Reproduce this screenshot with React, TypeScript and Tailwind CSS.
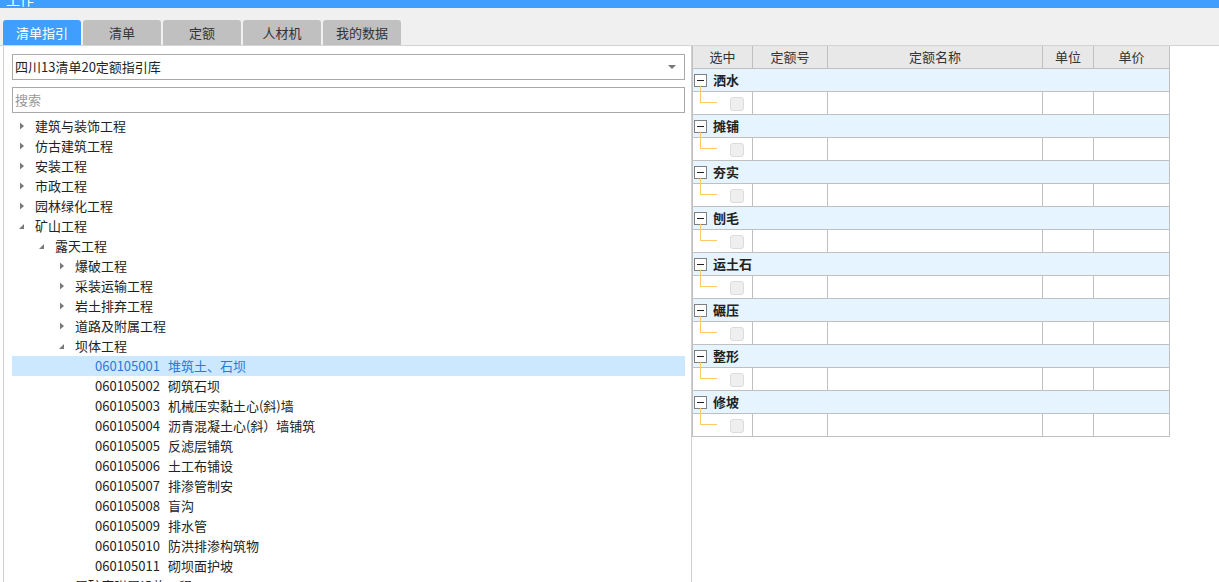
import React from "react";

const TABS = ["清单指引", "清单", "定额", "人材机", "我的数据"];

type Node = { level: number; text: string; code?: string; state?: "open" | "closed"; selected?: boolean };

const TREE: Node[] = [
  { level: 1, text: "建筑与装饰工程", state: "closed" },
  { level: 1, text: "仿古建筑工程", state: "closed" },
  { level: 1, text: "安装工程", state: "closed" },
  { level: 1, text: "市政工程", state: "closed" },
  { level: 1, text: "园林绿化工程", state: "closed" },
  { level: 1, text: "矿山工程", state: "open" },
  { level: 2, text: "露天工程", state: "open" },
  { level: 3, text: "爆破工程", state: "closed" },
  { level: 3, text: "采装运输工程", state: "closed" },
  { level: 3, text: "岩土排弃工程", state: "closed" },
  { level: 3, text: "道路及附属工程", state: "closed" },
  { level: 3, text: "坝体工程", state: "open" },
  { level: 4, code: "060105001", text: "堆筑土、石坝", selected: true },
  { level: 4, code: "060105002", text: "砌筑石坝" },
  { level: 4, code: "060105003", text: "机械压实黏土心(斜)墙" },
  { level: 4, code: "060105004", text: "沥青混凝土心(斜）墙铺筑" },
  { level: 4, code: "060105005", text: "反滤层铺筑" },
  { level: 4, code: "060105006", text: "土工布铺设" },
  { level: 4, code: "060105007", text: "排渗管制安" },
  { level: 4, code: "060105008", text: "盲沟" },
  { level: 4, code: "060105009", text: "排水管" },
  { level: 4, code: "060105010", text: "防洪排渗构筑物" },
  { level: 4, code: "060105011", text: "砌坝面护坡" },
  { level: 3, text: "尾矿库附属设施工程", state: "closed" },
];

const GROUPS = ["洒水", "摊铺", "夯实", "刨毛", "运土石", "碾压", "整形", "修坡"];

const INDENT = ["pl-0", "pl-0", "pl-[20px]", "pl-[40px]", "pl-[60px]"];

function Arrow({ state }: { state?: "open" | "closed" }) {
  if (state === "closed")
    return (
      <svg width="23" height="20" viewBox="0 0 23 20" className="shrink-0">
        <path d="M8 6.5 L12 10 L8 13.5 Z" fill="#7a7a7a" />
      </svg>
    );
  if (state === "open")
    return (
      <svg width="23" height="20" viewBox="0 0 23 20" className="shrink-0">
        <path d="M12 8 L12 13 L7 13 Z" fill="#7a7a7a" />
      </svg>
    );
  return <span className="w-[23px] shrink-0" />;
}

function TreeRow({ n }: { n: Node }) {
  return (
    <div
      className={`h-[20px] flex items-center ${INDENT[n.level]} ${n.selected ? "bg-[#cce8ff] text-[#2b78d8]" : "text-[#222]"}`}
    >
      <Arrow state={n.state} />
      {n.code && <span className="mr-[8px]">{n.code}</span>}
      <span className="whitespace-nowrap">{n.text}</span>
    </div>
  );
}

const CELL = "border-r border-b border-[#c0c0c0]";

export default function App() {
  return (
    <div
      className="h-screen overflow-hidden bg-white text-[13px] text-[#222]"
      style={{ fontFamily: '"Microsoft YaHei", "Noto Sans CJK SC", sans-serif' }}
    >
      <div className="h-[8px] bg-[#409eff] overflow-hidden">
        <div className="-mt-[11px] pl-[6px] text-white text-[14px] leading-[20px]">工作</div>
      </div>

      <div className="bg-[#f0f0f0] pt-[12px] pl-[3px] flex gap-[2px] border-b border-[#d4d4d4]">
        {TABS.map((t, i) => (
          <div
            key={t}
            className={`w-[78px] h-[25px] flex items-center justify-center rounded-t-[3px] ${i === 0 ? "bg-[#409eff] text-white" : "bg-[#c0c0c0] text-[#333]"}`}
          >
            {t}
          </div>
        ))}
      </div>

      <div className="flex h-[540px]">
        <div className="ml-[3px] w-[689px] border-l border-r border-[#d0d0d0] pl-[8px] pr-[6px] pt-[8px] overflow-hidden">
          <div className="h-[26px] border border-[#aaa] flex items-center pl-[2px] pr-[8px]">
            <span className="flex-1">四川13清单20定额指引库</span>
            <span className="w-0 h-0 border-l-[4px] border-r-[4px] border-t-[4px] border-l-transparent border-r-transparent border-t-[#777]" />
          </div>
          <div className="mt-[7px] h-[26px] border border-[#aaa] flex items-center pl-[2px] text-[#999]">搜索</div>
          <div className="mt-[3px]">
            {TREE.map((n, i) => (
              <TreeRow key={i} n={n} />
            ))}
          </div>
        </div>

        <div className="flex-1">
          <div className="w-[478px] border-l border-[#c0c0c0]">
            <div className="flex h-[23px] bg-[#e8e8e8] text-[#333]">
              <div className={`${CELL} w-[60px] flex items-center justify-center`}>选中</div>
              <div className={`${CELL} w-[75px] flex items-center justify-center`}>定额号</div>
              <div className={`${CELL} w-[215px] flex items-center justify-center`}>定额名称</div>
              <div className={`${CELL} w-[51px] flex items-center justify-center`}>单位</div>
              <div className={`${CELL} w-[76px] flex items-center justify-center`}>单价</div>
            </div>
            {GROUPS.map((g) => (
              <div key={g}>
                <div className="h-[23px] bg-[#e6f4ff] border-r border-b border-[#c0c0c0] flex items-center pl-[1px] relative">
                  <span className="w-[13px] h-[13px] border border-[#808080] bg-white flex items-center justify-center">
                    <span className="w-[7px] h-[1px] bg-[#222]" />
                  </span>
                  <span className="ml-[6px] font-bold text-[#222]">{g}</span>
                  <span className="absolute left-[7px] top-[17px] h-[6px] w-px bg-[#ffc766]" />
                </div>
                <div className="flex h-[23px]">
                  <div className={`${CELL} w-[60px] relative`}>
                    <span className="absolute left-[7px] top-0 h-[11px] w-[17px] border-l border-b border-[#ffc766]" />
                    <span className="absolute left-[37px] top-[5px] w-[14px] h-[14px] rounded-[3px] bg-[#efefef] border border-[#dcdcdc]" />
                  </div>
                  <div className={`${CELL} w-[75px]`} />
                  <div className={`${CELL} w-[215px]`} />
                  <div className={`${CELL} w-[51px]`} />
                  <div className={`${CELL} w-[76px]`} />
                </div>
              </div>
            ))}
          </div>
        </div>
      </div>
    </div>
  );
}
